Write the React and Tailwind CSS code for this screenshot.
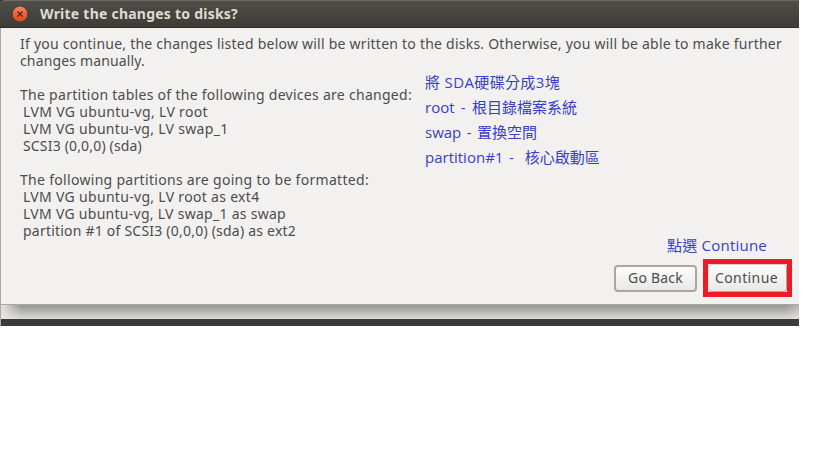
function CloseButton() {
  return (
    <svg className="size-4 shrink-0" viewBox="0 0 16 16" aria-label="Close">
      <defs>
        <linearGradient id="close-fill" x1="0" y1="0" x2="0" y2="1">
          <stop offset="0" stopColor="#f58a66" />
          <stop offset="0.5" stopColor="#ee6236" />
          <stop offset="1" stopColor="#de4a18" />
        </linearGradient>
      </defs>
      <circle cx="8" cy="8" r="7.9" fill="#37352f" />
      <circle cx="8" cy="8" r="7.4" fill="url(#close-fill)" />
      <path d="M5.5 5.5l5 5M10.5 5.5l-5 5" stroke="#4a2414" strokeWidth="1.2" />
    </svg>
  );
}

function TitleBar() {
  return (
    <header className="flex h-7 items-center rounded-tl-[5px] border-t border-b border-t-[#6a6963] border-b-[#2f2e2a] bg-linear-to-b from-[#4f4e49] to-[#3d3c37] pl-3">
      <CloseButton />
      <h1 className="ml-3 whitespace-pre font-['Noto_Sans',sans-serif] text-[14px] leading-5 font-bold tracking-[0.234px] text-[#dfdbd2]">
        Write the changes to disks?
      </h1>
    </header>
  );
}

function ChangeSummary() {
  return (
    <div className="w-[405px] shrink-0 whitespace-pre pt-[17px]">
      <p className="tracking-[0.282px]">The partition tables of the following devices are changed:</p>
      <ul className="pl-[3px]">
        <li className="tracking-[0.345px]">LVM VG ubuntu-vg, LV root</li>
        <li className="tracking-[0.304px]">LVM VG ubuntu-vg, LV swap_1</li>
        <li className="tracking-[0.17px]">SCSI3 (0,0,0) (sda)</li>
      </ul>
      <p className="mt-[17px] tracking-[0.305px]">The following partitions are going to be formatted:</p>
      <ul className="pl-[3px]">
        <li className="tracking-[0.309px]">LVM VG ubuntu-vg, LV root as ext4</li>
        <li className="tracking-[0.277px]">LVM VG ubuntu-vg, LV swap_1 as swap</li>
        <li className="tracking-[0.218px]">partition #1 of SCSI3 (0,0,0) (sda) as ext2</li>
      </ul>
    </div>
  );
}

function Notes() {
  return (
    <div className="whitespace-pre pt-px font-['Open_Sans','Noto_Sans_CJK_TC',sans-serif] text-[15px] leading-[25px] text-[#383ecb]">
      <p className="tracking-[0.357px]">將 SDA硬碟分成3塊</p>
      <p className="[word-spacing:2.4px]">root - 根目錄檔案系統</p>
      <p className="[word-spacing:1.55px]">swap - 置換空間</p>
      <p className="[word-spacing:1.6px]">{"partition#1 -  核心啟動區"}</p>
      <p className="mt-[63px] ml-[242px] tracking-[0.224px]">點選 Contiune</p>
    </div>
  );
}

export default function App() {
  return (
    <div className="min-h-[460px] w-full bg-white">
      <main className="w-[799px] bg-[#3c3b37]">
        <TitleBar />
        <section className="h-[277px] border-b border-l border-[#a9a8a3] bg-[#f2f1f0] pt-[7px] pl-[19px] font-['Noto_Sans',sans-serif] text-[14px] leading-[17px] text-[#4c4c4c]">
          <p className="whitespace-pre tracking-[0.232px]">
            If you continue, the changes listed below will be written to the disks. Otherwise, you will be able to make further
          </p>
          <p className="tracking-[0.153px]">changes manually.</p>
          <div className="flex h-[190px]">
            <ChangeSummary />
            <Notes />
          </div>
          <div className="flex h-[38px] items-center justify-end gap-1.5 pr-[7px]">
            <button className="h-[27px] w-[83px] rounded-[4px] border-2 border-[#a9a7a4] bg-linear-to-b from-[#fdfdfd] to-[#e9e8e7] pb-0.5 leading-[21px] tracking-[0.221px] whitespace-nowrap">
              Go Back
            </button>
            <div className="h-[38px] w-[89px] border-5 border-[#ed1c24]">
              <button className="h-[28px] w-full rounded-[4px] border border-t-[#d2d0cd] border-r-[#a9a7a4] border-b-[#a9a7a4] border-l-[#e2e1df] bg-linear-to-b from-[#fdfdfd] to-[#e9e8e7] pr-0.5 pb-0.5 leading-[23px] tracking-[0.395px]">
                Continue
              </button>
            </div>
          </div>
        </section>
        <div className="h-3.5 border-l border-[#a9a8a3] bg-[#e6e5e4]">
          <div className="h-full bg-linear-to-b from-[#969694] to-[#dcdbda] mask-[linear-gradient(to_right,transparent,black_20px,black_784px,rgba(0,0,0,0.6))]" />
        </div>
        <div className="h-[7px] border-l border-[#a9a8a3]" />
      </main>
    </div>
  );
}
